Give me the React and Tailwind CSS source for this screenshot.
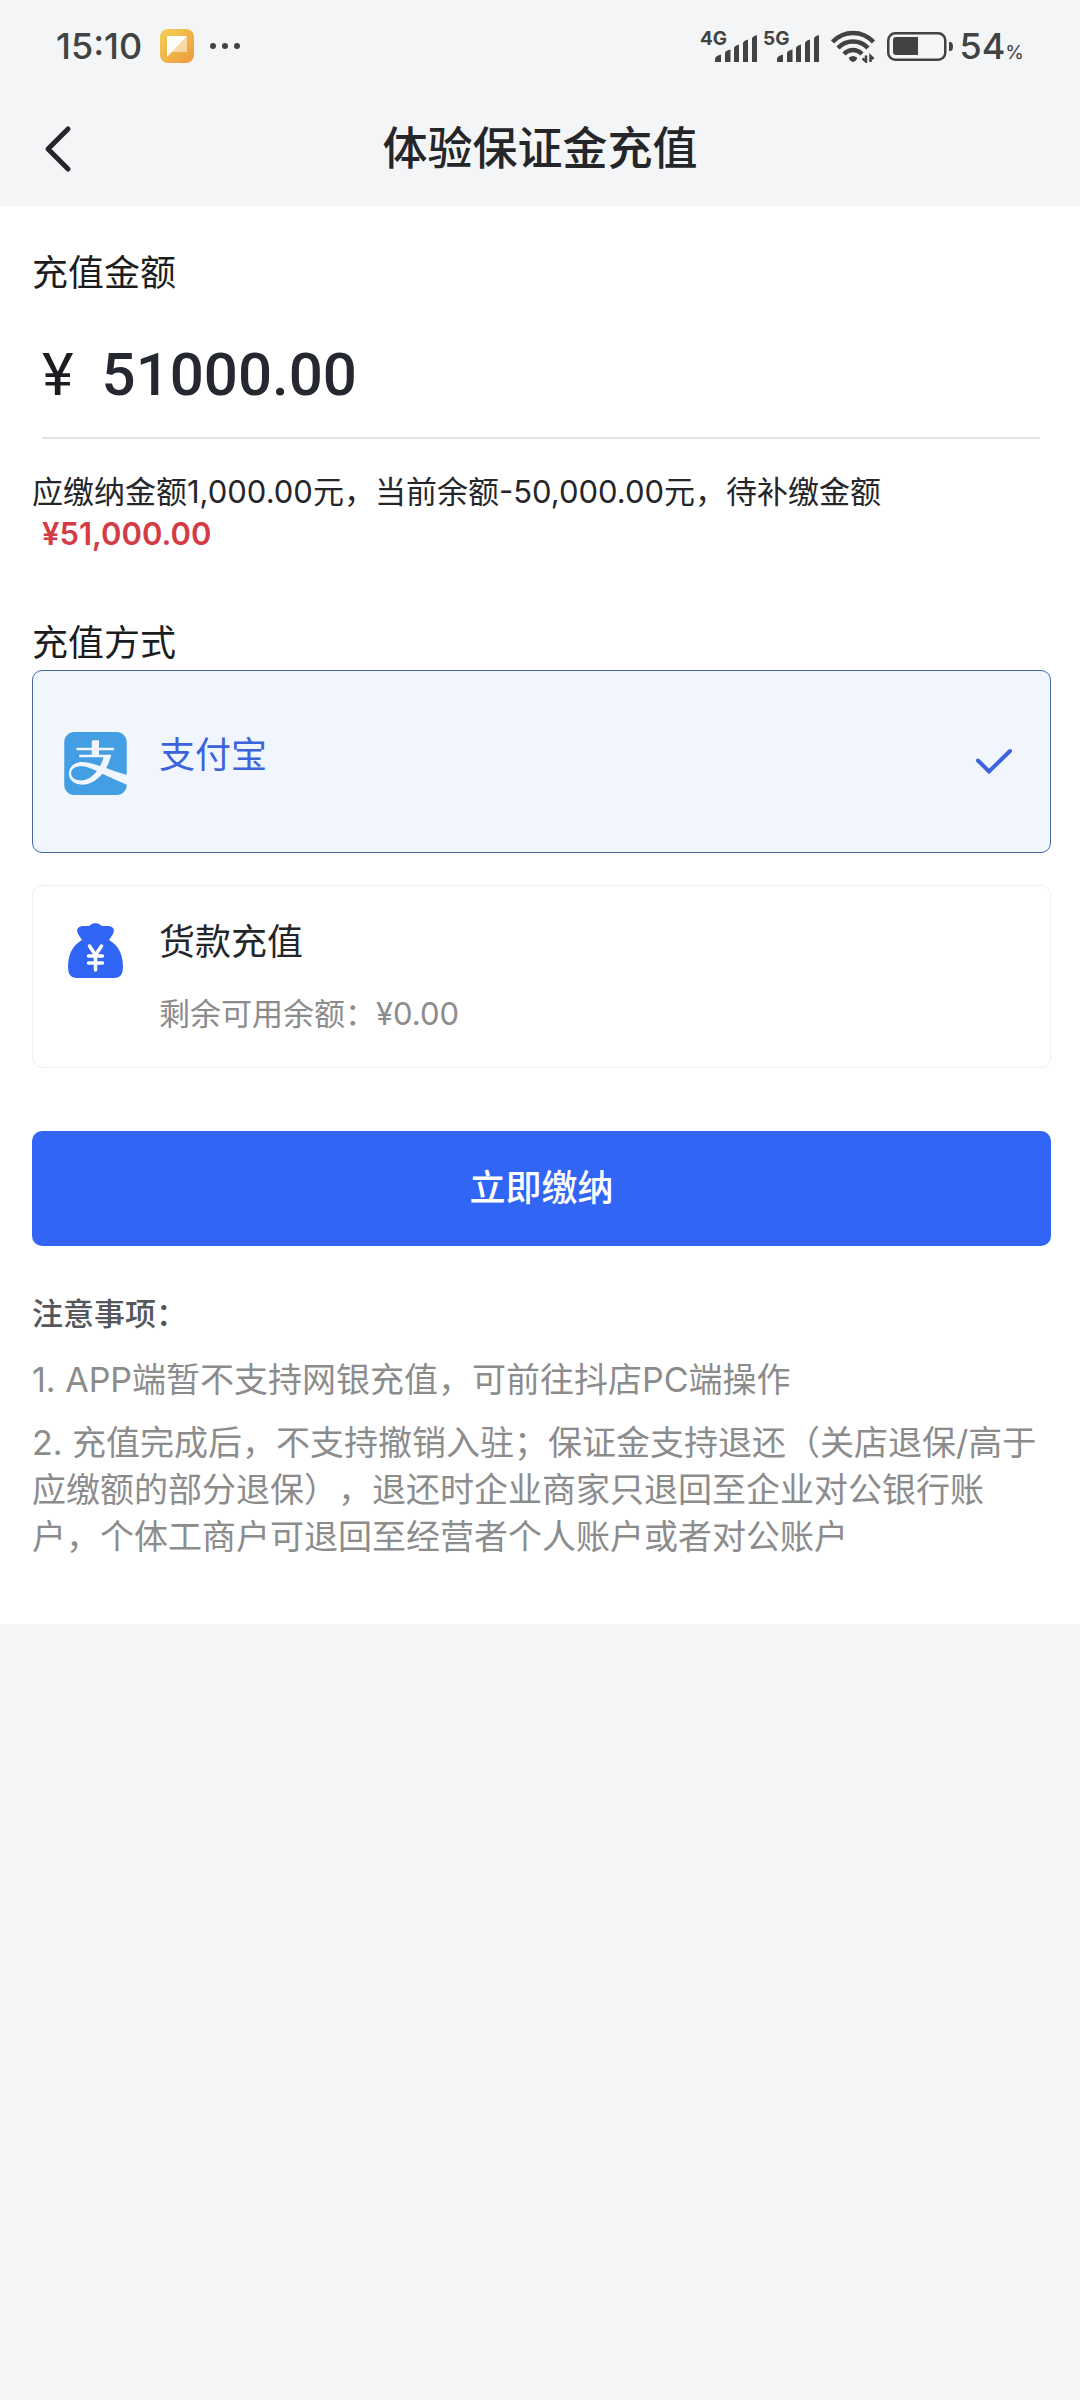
import React, { useState } from "react";
import { SiAlipay } from "react-icons/si";

const SignalBars = () => (
  <svg viewBox="0 0 42 27" className="w-[42px] h-[27px]" fill="currentColor" aria-hidden="true">
    <path d="M0 27v-3.500q1-3 6-4v7.500z" />
    <path d="M10 27v-9.500q1-2 5.500-3v12.500z" />
    <path d="M19 27v-14.500q1-2 5-3v17.500z" />
    <path d="M28 27v-19.500q1-2 5-3v22.500z" />
    <path d="M37 27v-24q1-2 5-3v27z" />
  </svg>
);

const Signal = ({ label }) => (
  <div className="flex items-end">
    <span className="self-start text-[19px] leading-[16px] font-bold">{label}</span>
    <div className="-ml-3 mt-1">
      <SignalBars />
    </div>
  </div>
);

const WifiIcon = () => (
  <svg viewBox="0 0 44 34" className="w-[44px] h-[34px]" fill="none" stroke="currentColor" aria-hidden="true">
    <g strokeWidth="4.500">
      <path d="M1.500 13Q10 4 22 4t20.500 9" />
      <path d="M7 19Q13 12.500 22 12.500t15 6.500" />
      <path d="M13 25Q17 21 22 21t9 4" />
    </g>
    <path d="M18 28.500q4-3 8 0v1.500q-2 3-4 3t-4-3z" fill="currentColor" stroke="none" />
    <path d="M31.500 29.500l3.500 3v-6M39.500 33v-6l3 3" strokeWidth="2.500" />
  </svg>
);

const BatteryIcon = () => (
  <svg viewBox="0 0 66 29" className="w-[66px] h-[29px]" aria-hidden="true">
    <rect x="1.250" y="1.250" width="57" height="26.500" rx="7" fill="none" stroke="currentColor" strokeWidth="2.500" />
    <path d="M9 5h22v18H9q-3 0-3-3V8q0-3 3-3z" fill="currentColor" />
    <path d="M62 10h1q3 0 3 4.500t-3 4.500h-1z" fill="currentColor" />
  </svg>
);

const NoteAppIcon = () => (
  <svg viewBox="0 0 34 34" className="w-[34px] h-[34px]" aria-hidden="true">
    <defs>
      <linearGradient id="noteApp" x1="0" y1="0" x2="1" y2="1">
        <stop offset="0" stopColor="#f3d154" />
        <stop offset="1" stopColor="#ee9a40" />
      </linearGradient>
    </defs>
    <rect width="34" height="34" rx="8" fill="url(#noteApp)" />
    <path d="M7 7h20L7 28z" fill="#fff" />
    <path d="M27 7v16H11.500z" fill="#fff" opacity=".5" />
  </svg>
);

const MoneyBagIcon = () => (
  <svg viewBox="0 -1 63 63" className="w-[63px] h-[63px]" aria-hidden="true">
    <path
      d="M18 21L14 15Q11 8 18 7Q21 7 25 7Q31 1 38 7Q42 7 45 7Q52 8 49 15L45 21Q59 29 59 48Q59 59 51 59H12Q4 59 4 48Q4 29 18 21Z"
      fill="#3165f6"
    />
    <path
      d="M25.500 27l6 9 6-9M31.500 36v15M24.500 37h14M24.500 44h14"
      fill="none"
      stroke="#fff"
      strokeWidth="3.500"
      strokeLinecap="round"
    />
  </svg>
);

const CheckIcon = () => (
  <svg viewBox="0 0 40 40" className="w-10 h-10" fill="none" stroke="#3c62dc" strokeWidth="4" strokeLinecap="round" aria-hidden="true">
    <path d="M4 17.500l11 11L36 8" />
  </svg>
);

const METHODS = [
  {
    id: "alipay",
    title: "支付宝",
    icon: <SiAlipay className="w-[63px] h-[63px] text-[#439ee3]" />,
  },
  {
    id: "balance",
    title: "货款充值",
    note: "剩余可用余额：¥0.00",
    icon: <MoneyBagIcon />,
  },
];

const PayMethod = ({ method, selected, onSelect }) => (
  <label
    className={`flex min-h-[183px] gap-8 rounded-[10px] border pl-[31px] pr-9 pt-8 pb-[29px] cursor-pointer ${
      method.note ? "items-start" : "items-center"
    } ${selected ? "border-[#4668a8] bg-[#f0f5fe]" : "border-[#efeff0] bg-white"}`}
  >
    <input
      type="radio"
      name="method"
      value={method.id}
      checked={selected}
      onChange={() => onSelect(method.id)}
      className="sr-only"
    />
    {method.icon}
    <span className={`flex-1 ${method.note ? "" : "pb-4"}`}>
      <span className={`block text-[36px] leading-[48px] ${selected ? "text-[#3c62dc]" : "text-[#252629]"}`}>
        {method.title}
      </span>
      {method.note && (
        <span className="block mt-6 text-[31px] leading-[48px] text-[#8c8c8c]">{method.note}</span>
      )}
    </span>
    {selected && <CheckIcon />}
  </label>
);

const App = () => {
  const [amount, setAmount] = useState("51000.00");
  const [method, setMethod] = useState("alipay");

  return (
    <div className="min-h-screen bg-[#f4f5f7] font-['Inter','Noto_Sans_CJK_SC',sans-serif] text-[#1c1d21]" lang="zh-CN">
      {/* Status bar */}
      <div className="flex h-[92px] items-center justify-between pl-14 pr-14 text-[#404342]">
        <div className="flex items-center">
          <span className="text-[36px] leading-[40px] font-medium">15:10</span>
          <div className="ml-[18px]">
            <NoteAppIcon />
          </div>
          <div className="ml-4 flex gap-[6px]">
            <i className="size-[6px] rounded-full bg-current" />
            <i className="size-[6px] rounded-full bg-current" />
            <i className="size-[6px] rounded-full bg-current" />
          </div>
        </div>
        <div className="flex items-center">
          <Signal label="4G" />
          <div className="ml-[6px]">
            <Signal label="5G" />
          </div>
          <div className="ml-3">
            <WifiIcon />
          </div>
          <div className="ml-3">
            <BatteryIcon />
          </div>
          <div className="ml-[6px] flex items-baseline font-medium">
            <span className="text-[36px] leading-[40px]">54</span>
            <span className="text-[19px] leading-[20px] font-normal">%</span>
          </div>
        </div>
      </div>

      {/* Title bar */}
      <header className="grid h-[114px] grid-cols-[1fr_auto_1fr] items-center px-10">
        <button type="button" aria-label="返回" className="w-9 text-[#252629]">
          <svg viewBox="0 0 36 52" className="w-9 h-[52px]" fill="none" stroke="currentColor" strokeWidth="5" strokeLinecap="round" strokeLinejoin="round">
            <path d="M28 6L8 26l20 20" />
          </svg>
        </button>
        <h1 className="text-[45px] leading-[60px] font-medium text-[#252629]">体验保证金充值</h1>
      </header>

      <main className="bg-white pl-8 pr-[29px] pt-[43px] pb-16">
        <label htmlFor="amount" className="block text-[36px] leading-[48px]">
          充值金额
        </label>
        <div className="mt-[38px] ml-[10px] mr-[11px] flex items-center border-b-2 border-[#e2e2e2] pb-[22px] font-['Roboto','Noto_Sans_CJK_SC',sans-serif] text-[60px] leading-[80px]">
          <span>¥</span>
          <input
            id="amount"
            type="text"
            inputMode="decimal"
            value={amount}
            onChange={(e) => setAmount(e.target.value)}
            className="ml-7 h-20 min-w-0 flex-1 bg-transparent font-medium text-[#252830] outline-none"
          />
        </div>
        <p className="mt-8 text-[31px] leading-[42px] text-[#252629]">
          应缴纳金额1,000.00元，当前余额-50,000.00元，待补缴金额
          <span className="ml-[10px] inline-block font-semibold text-[#d43b45]">¥51,000.00</span>
        </p>

        <h2 className="mt-[61px] text-[36px] leading-[54px]">充值方式</h2>
        <div className="flex flex-col gap-8">
          {METHODS.map((m) => (
            <PayMethod key={m.id} method={m} selected={m.id === method} onSelect={setMethod} />
          ))}
        </div>

        <button
          type="button"
          className="mt-[63px] h-[115px] w-full rounded-[10px] bg-[#3165f6] pb-[2px] text-[36px] leading-[48px] font-medium text-white"
        >
          立即缴纳
        </button>

        <section className="mt-11 [text-spacing-trim:space-all]">
          <h3 className="text-[31px] leading-[48px] font-medium text-[#56575a]">注意事项：</h3>
          <div className="mt-[18px] flex flex-col gap-4 text-[34px] leading-[47px] text-[#8c8c8c]">
            <p>1. APP端暂不支持网银充值，可前往抖店PC端操作</p>
            <p>
              2. 充值完成后，不支持撤销入驻；保证金支持退还（关店退保/高于应缴额的部分退保），退还时企业商家只退回至企业对公银行账户，个体工商户可退回至经营者个人账户或者对公账户
            </p>
          </div>
        </section>
      </main>
    </div>
  );
};

export default App;
